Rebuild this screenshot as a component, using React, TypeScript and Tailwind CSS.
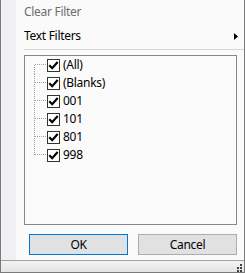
import React from 'react';

const items = ['(All)', '(Blanks)', '001', '101', '801', '998'];

// tree connector for one row: vertical dotted line plus a stub to the checkbox
function TreeLines({ first, last }: { first: boolean; last: boolean }) {
  return (
    <svg width="21" height="18" className="shrink-0" shapeRendering="crispEdges">
      <line
        x1="9.5"
        x2="9.5"
        y1={first ? 9 : 0}
        y2={last ? 9 : 18}
        stroke="#a0a0a0"
        strokeWidth="1"
        strokeDasharray="1 1"
      />
      <line x1="10" x2="21" y1="8.5" y2="8.5" stroke="#a0a0a0" strokeWidth="1" strokeDasharray="1 1" />
    </svg>
  );
}

function CheckBox() {
  return (
    <div className="w-[13px] h-[13px] shrink-0 border border-[#333333] bg-white flex items-center justify-center">
      <svg width="11" height="11" viewBox="0 0 11 11">
        <path d="M1.3 5.2 L4.2 8.2 L9.7 2" fill="none" stroke="#000" strokeWidth="2.2" />
      </svg>
    </div>
  );
}

export default function App() {
  return (
    <div
      className="w-[245px] h-[273px] flex flex-col border-x border-b border-[#7a7a7a] bg-[#fafafa] text-[12px] tracking-[-0.3px] text-black"
      style={{ fontFamily: '"Noto Sans", "Liberation Sans", sans-serif' }}
    >
      <div className="flex flex-1 min-h-0">
        <div className="w-[15px] bg-[#f0eff4]" />
        <div className="flex-1 flex flex-col pl-[8px] pr-[7px]">
          {/* menu items */}
          <div className="h-[24px] flex items-center text-[#6d6d73]">Clear Filter</div>
          <div className="h-[24px] flex items-center justify-between">
            <span>Text Filters</span>
            <svg width="4" height="7" viewBox="0 0 4 7" className="mr-[-1px]">
              <path d="M0 0 L4 3.5 L0 7 Z" fill="#000" />
            </svg>
          </div>
          <div className="h-px bg-[#d4d4d4] mt-px -mr-[7px]" />

          {/* list box */}
          <div className="mt-[5px] h-[170px] border border-[#828790] bg-[#fbfbfb] flex flex-col">
            {items.map((label, i) => (
              <div key={label} className="h-[18px] flex items-center">
                <TreeLines first={i === 0} last={i === items.length - 1} />
                <div className="ml-px">
                  <CheckBox />
                </div>
                <span className="ml-[3px] leading-none">{label}</span>
              </div>
            ))}
          </div>

          {/* buttons */}
          <div className="mt-[9px] flex gap-[10px] pl-[5px]">
            <button className="w-[99px] h-[21px] border border-[#0078d7] bg-[#e1e1e1] flex items-center justify-center">
              OK
            </button>
            <button className="w-[99px] h-[21px] border border-[#adadad] bg-[#e1e1e1] flex items-center justify-center">
              Cancel
            </button>
          </div>
        </div>
      </div>

      {/* status / resize bar */}
      <div className="h-[12px] border-t border-[#a0a0a0] bg-gradient-to-b from-[#f3f3f3] to-[#e4e4e4] flex justify-end items-end">
        <svg width="8" height="9" viewBox="0 0 8 9" className="mr-px" shapeRendering="crispEdges">
          <rect x="5" y="1" width="2" height="2" fill="#404040" />
          <rect x="2" y="4" width="2" height="2" fill="#404040" />
          <rect x="5" y="4" width="2" height="2" fill="#404040" />
          <rect x="2" y="7" width="2" height="2" fill="#404040" />
          <rect x="5" y="7" width="2" height="2" fill="#404040" />
        </svg>
      </div>
    </div>
  );
}
